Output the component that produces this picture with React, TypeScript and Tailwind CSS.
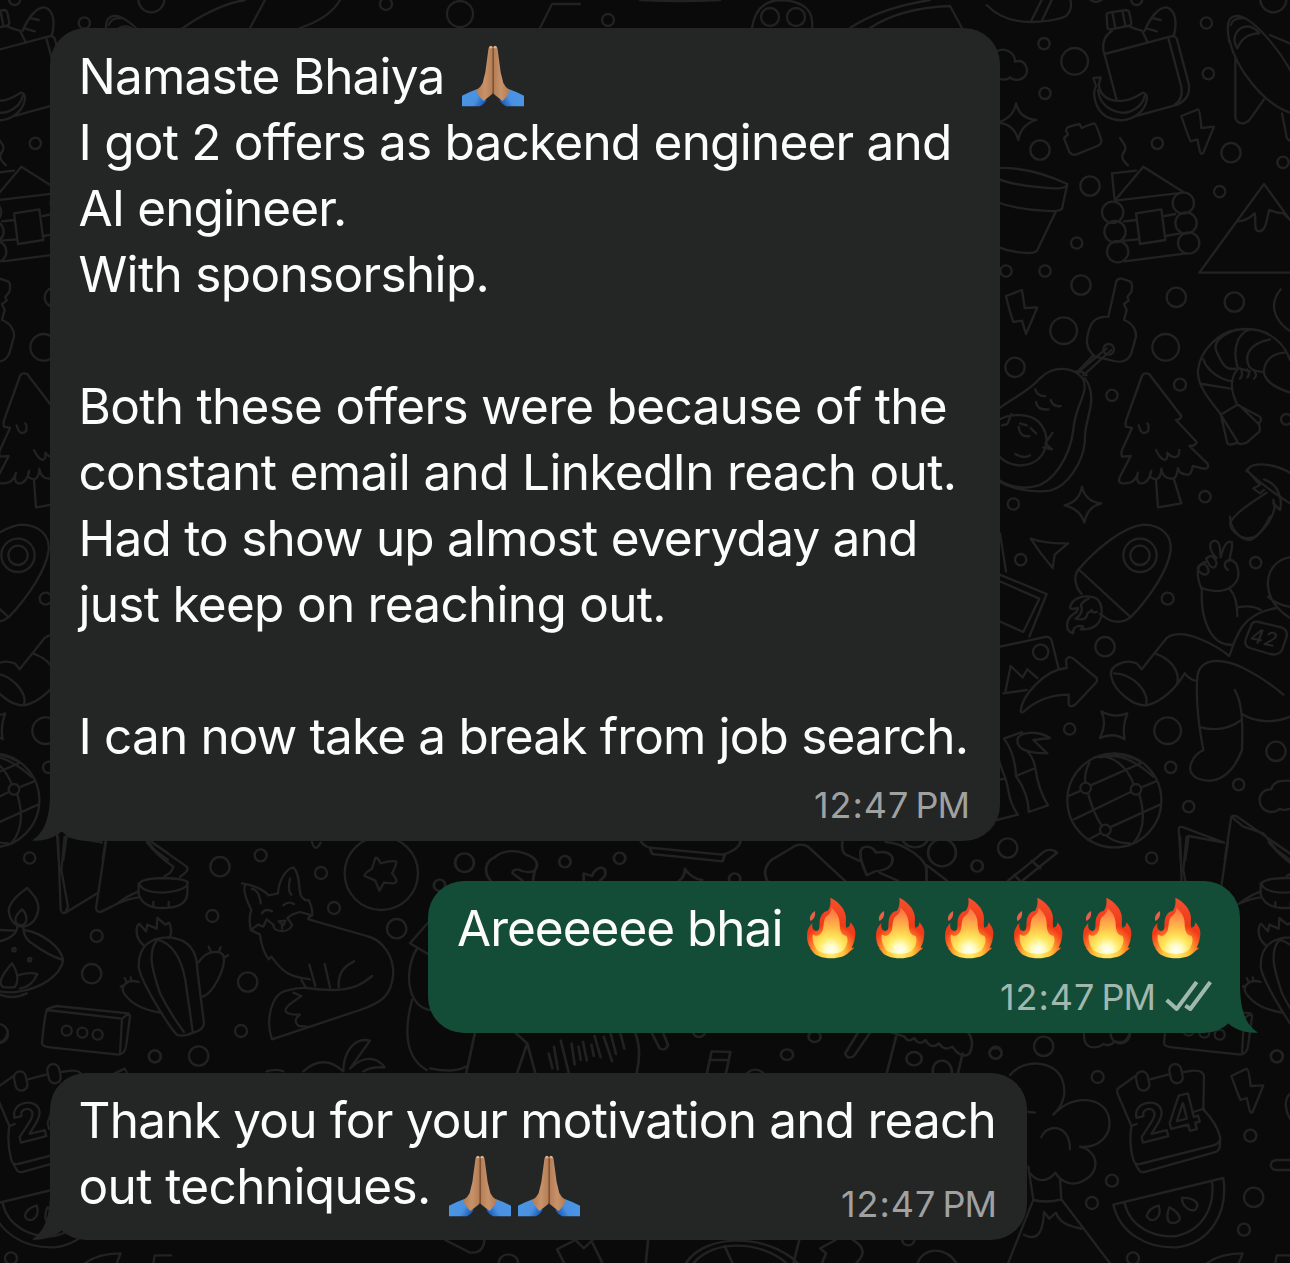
import type { ReactNode } from "react";

function Circles({ items }: { items: number[][] }) {
  return (
    <>
      {items.map(([x, y, r], i) => (
        <circle key={i} cx={x} cy={y} r={r} />
      ))}
    </>
  );
}

function Doodles() {
  return (
    <g id="doodles" fill="none" stroke="#222222" strokeWidth="7" strokeLinecap="round" strokeLinejoin="round">
      <g transform="translate(990 0) scale(.33333)">
        <Circles items={[[162,131,17],[254,184,40],[165,280,17],[150,450,29],[649,69,17],[655,221,17],[502,430,17],[723,458,29],[879,487,17],[300,558,29],[689,575,17],[260,729,17],[48,813,17],[165,813,17],[440,-2,17],[850,-2,39],[318,-20,26]]} />
        <path d="M-10 15Q40 68 130 66Q200 63 228 48Q252 25 238-10M122 66L160-10M155 64L190-10" />
        <path d="M20 155C40 140 75 155 75 185C105 175 120 210 104 230C92 242 70 243 60 232C50 242 30 240 20 232" />
        <path d="M78 310Q88 355 138 360Q92 375 85 420Q72 370 20 368Q70 355 78 310Z" />
        <path d="M232 382Q250 376 268 372L276 384Q290 376 312 370Q320 372 334 422Q334 432 322 438L258 464Q246 466 238 456L222 414L234 404L228 392Z" />
        <path d="M350 48Q346 42 358 38L408 30Q416 30 418 38L424 68Q424 76 414 78L362 88Q352 88 352 80ZM368 42L376 84M398 36L406 76" />
        <path d="M366 92Q335 112 340 150L380 300M420 80Q436 88 456 92L474 128M464 92C480 55 505 20 530 22C560 30 560 75 552 105M486 54L512 60M472 86L500 94M344 162L540 110Q552 104 560 115L596 250Q604 295 560 315L440 348M536 118L574 260Q580 300 552 316" />
        <path d="M310 234L332 232L326 256C335 300 370 305 400 302C430 300 452 280 460 278C480 285 470 320 445 342C420 362 385 368 350 350C315 330 306 280 318 258ZM324 270C330 330 390 345 420 335C455 320 462 300 464 288" />
        <path d="M574 348L624 328Q630 330 634 384L672 380L640 458Q635 466 630 456L622 418L602 424Q598 420 574 348Z" />
        <path d="M390 414C395 425 412 435 405 450C395 465 390 475 414 496M366 520L438 512M366 520L374 602L460 500L580 576M376 602L580 578M402 664L438 660M524 648L556 642M402 722L444 718M526 708L572 700M404 784L590 760M438 640L514 628L526 720L450 732Z" />
        <Circles items={[[368,637,32],[375,695,32],[383,755,32],[580,609,32],[588,669,32],[596,729,32]]} />
        <path d="M0 505Q110 495 232 552Q230 572 155 562Q70 556 20 535M232 552L216 626Q210 636 160 632Q80 628 20 606M198 634L142 750Q136 762 100 758Q60 756 20 740" />
        <path d="M718 125C705 60 720 45 750 48C790 60 880 150 930 270M742 145C720 110 745 75 780 80Q800 88 808 100Q760 100 742 145ZM722 75Q730 50 765 55M718 120C740 210 820 310 900 338M736 176V355C745 375 765 375 780 358L822 298M840 105L910 135M876 340L890 412Q896 426 910 420" />
        <path d="M628 818L822 552L900 660M910 818H628M740 664Q770 664 794 640C800 660 788 694 808 694C830 694 830 650 838 630Q860 640 880 640L900 660" />
      </g>

      <g transform="translate(990 270) scale(.33333)">
        <Circles items={[[273,45,29],[221,182,40],[75,292,29],[559,82,29],[733,96,29],[527,232,40],[570,344,18],[366,376,17],[645,680,17],[70,702,17],[889,448,16],[356,238,16]]} />
        <path d="M48 78L96 60L104 114L142 112L108 192L96 152L70 156Q60 130 48 78Z" />
        <path d="M355 140L378 38Q380 24 396 26L420 34Q430 40 424 66L412 80L416 92L402 102L410 120L402 150C430 160 440 185 438 200L424 250C412 278 390 280 360 270L316 260C290 240 288 220 292 200C300 160 310 140 355 140ZM350 235L272 300L254 306M310 256L262 306M364 240L280 316M262 308Q275 300 290 316" />
        <path d="M20 420C80 375 110 370 150 325C190 285 250 290 278 325C300 370 255 400 250 480C240 560 190 640 130 650C80 660 40 640 20 625M285 325C330 390 280 450 285 510C280 580 230 650 180 662C120 670 60 655 20 630M136 358Q142 380 166 378M182 390Q190 412 212 408M138 396Q142 422 176 418M30 448C60 430 120 430 145 455C170 480 180 520 155 556C130 590 70 600 28 560M64 432L52 462L36 466M188 488L166 520L186 538L160 532M86 470C88 492 100 502 118 498M122 474L138 490M76 552Q100 568 120 556M90 460L110 466" />
        <path d="M276 650Q286 695 334 700Q292 710 283 758Q270 716 224 706Q268 695 276 650Z" />
        <path d="M468 310Q478 310 482 318L574 438Q574 448 558 450L620 516Q618 528 598 528L652 580Q660 598 640 596L608 588Q604 616 592 614Q566 612 564 594Q560 626 548 626Q518 628 514 596Q512 634 490 626Q474 622 484 602Q476 642 450 640Q436 634 444 608Q436 640 404 640Q380 642 390 620L422 558L396 560Q392 548 396 540L426 474L408 470Q404 460 412 440L456 318Q460 310 468 310ZM446 466C452 490 460 494 474 484Q478 466 472 460M498 540C512 570 528 578 532 560L532 548C548 566 568 568 568 540M498 630L504 712L574 700L552 628" />
        <path d="M692 432C650 380 620 340 624 300C630 240 690 185 740 180C820 165 880 210 900 270M740 178C680 200 670 225 680 245C700 290 710 300 736 296M780 178C740 190 728 240 742 290M840 208C780 220 760 255 778 290Q790 304 822 306M884 248C840 250 820 280 822 310C830 340 870 360 910 370M640 268C650 300 690 330 728 334M636 342L722 356M696 432L742 404C720 360 720 320 746 294L780 304M754 300Q760 318 750 326M772 298Q782 312 772 322M792 302Q804 316 792 326M692 432L712 520Q720 528 742 518Q750 526 770 518L808 485Q812 470 806 462Q820 445 806 438L742 404M696 440L742 514M748 406L806 462" />
        <path d="M872 58C830 110 860 160 910 190M770 605C780 570 860 580 910 615M770 600Q820 650 900 700M774 604L810 645L790 655L810 670L822 660M822 628C860 640 880 680 870 720L850 700M850 690L854 712C845 760 800 805 780 804C750 808 720 780 720 760Q730 730 830 668" />
      </g>

      <g transform="translate(990 520) scale(.33333)">
        <Circles items={[[92,119,17],[450,106,50],[450,106,29],[533,236,18],[797,128,17],[345,380,29],[152,396,23],[239,627,17],[533,632,40],[858,694,29],[542,742,17],[746,794,17],[596,860,17],[53,984,29]]} />
        <path d="M122 56Q170 72 234 70L194 104L188 144Q150 100 122 56Z" />
        <path d="M264 150C320 85 400 20 460 14C520 15 545 50 542 90C535 150 480 230 424 290C400 310 370 310 345 292L330 282M268 150L420 290M264 150C250 170 255 200 275 222M300 230C340 230 345 290 320 315Q300 330 272 328Q290 315 264 318Q246 325 250 340C225 335 225 300 250 282Q262 278 264 264Q240 270 240 262C245 240 270 225 300 230M296 236Q265 250 276 266Q275 285 256 296Q290 305 292 280L306 270Q304 280 320 276" />
        <path d="M20 160L170 222L118 350M20 180L148 236L100 336L20 300M30 40L48 155M20 382L170 350Q182 350 186 366L206 446M40 520L110 510M46 516L62 438L98 472L112 448L142 474" />
        <path d="M92 574C95 530 160 450 230 444L228 420Q235 405 250 416L320 474Q324 484 314 492L258 552Q240 566 236 552L236 524C180 524 140 540 102 574Q96 580 92 574Z" />
        <path d="M455 448L440 430C400 415 355 440 364 470C370 510 430 560 470 556C520 545 560 500 584 460Q600 480 616 482M455 448L530 354C580 315 690 385 718 408C740 340 760 280 860 264M494 400C540 415 570 450 562 490M372 460C430 460 480 520 468 552M636 208C630 290 660 380 728 374M720 208C740 230 742 260 742 288M744 262Q785 254 812 270M636 210C615 160 620 130 650 125M636 204C690 230 770 200 738 130L725 120C700 120 700 140 714 150M680 114C655 90 655 65 675 62C690 65 690 80 692 112C700 80 710 60 725 66C730 80 722 95 718 122M626 138Q650 120 656 155Q650 170 634 160Q618 150 626 138M648 116Q670 95 680 130Q675 150 660 138Z" />
        <path d="M720-10C720 20 745 60 780 60Q810 50 840-10M910 110C860 115 830 150 834 200Q840 260 910 300M834 230Q860 255 910 262M770 350L784 315Q790 302 806 306L874 322Q894 330 890 350L876 390Q865 408 840 402L780 384Q758 376 770 350Z" />
        <path d="M640 690Q615 560 622 470C630 410 700 415 760 444Q830 480 880 524M734 510C760 550 758 630 756 690C730 760 680 800 620 774C580 750 610 705 640 690M632 622Q700 640 754 600M756 582C800 610 860 608 900 590" />
        <path d="M334 574Q370 596 412 580Q396 620 404 658Q370 636 330 654Q352 610 334 574Z" />
        <circle cx="373" cy="841" r="141" />
        <path d="M298 728Q282 760 286 788M294 820Q310 880 336 918M312 712C370 700 410 740 432 794M330 712Q400 690 490 770M448 824C465 880 465 930 430 970M236 828L272 812M302 796L456 728M252 898L422 816M454 802L498 784M294 960L330 940M360 922L510 854M352 950Q380 970 420 970M370 700Q410 705 450 724" />
        <Circles items={[[287,804,16],[438,808,16],[346,930,16]]} />
        <path d="M42 656Q75 700 78 768L136 744Q130 710 108 690M42 656L96 636M78 768C100 800 116 840 116 876L174 856Q145 810 136 744M82 660C85 635 140 630 180 654L130 660L172 700C120 700 80 690 82 660ZM20 900L84 884C50 840 60 800 40 760L20 700M22 780L44 776" />
        <path d="M910 784Q850 775 844 808C800 805 795 870 842 876Q860 876 868 866Q885 875 910 862M572 1020L566 925Q568 918 580 922L702 968M586 1020L596 948L702 968M704 1020L724 890Q735 884 744 892L900 1000M724 890L760 920L820 940L860 990L900 1020" />
      </g>
      <text x="1264" y="645" textAnchor="middle" transform="rotate(12 1265 638)" fontFamily="Inter, sans-serif" fontSize="20" fontStyle="italic" fontWeight="500" letterSpacing="1" fill="#262626" stroke="none">42</text>

      <g transform="translate(0 830) scale(.33333)">
        <Circles items={[[89,84,17],[660,110,29],[782,76,18],[963,129,18],[637,258,18],[290,318,18],[1002,234,18],[1190,296,29],[275,431,29],[743,456,29],[723,603,18],[465,679,18],[596,678,29],[-5,611,29],[1144,130,110],[200,602,15],[247,608,15],[293,614,15],[42,359,5],[89,389,5]]} />
        <path d="M174 20L182 240Q186 254 200 246L292 190M194 20L184 120L204 230L196 248M318 36L288 234Q290 250 306 244L350 222Q380 198 416 184M350 222Q390 204 416 202M440 36Q470 75 520 110Q515 130 494 138M460 40L560 110Q570 122 540 140" />
        <path d="M418 160Q430 145 490 144Q555 145 564 158Q560 182 490 188Q425 188 418 160ZM416 160V194Q430 232 480 234Q560 236 562 190V160M460 216V230M506 216V230" />
        <path d="M82 174Q30 210 26 240Q30 282 62 290C105 290 130 240 104 200ZM66 238C40 260 40 284 64 286C84 282 84 255 66 238ZM52 290Q50 320 0 334M70 290Q70 320 90 336Q150 380 190 390M0 300L46 302M74 300C130 310 180 350 190 390C180 440 120 475 60 484Q30 490 0 484M0 494Q40 510 80 490M36 400C10 430-10 460 10 472H44C60 450 50 420 36 400ZM52 436Q90 425 112 432Q96 470 60 476" />
        <path d="M430 345C400 320 410 280 418 282L438 304L442 284L470 296L472 264L496 284L508 278Q520 310 506 324M530 614C500 580 420 450 416 410C415 350 450 320 510 322C580 330 592 380 592 420L612 580Q610 600 580 608Q550 622 530 614ZM470 332C440 370 460 430 480 490Q510 550 552 606M470 328C520 340 545 390 556 450L578 604M596 396C620 360 660 360 670 376C680 410 640 490 608 500M416 456C380 445 360 470 372 490C400 530 440 540 480 548M626 350L632 364M662 352L656 366M684 376L672 382M362 470L372 466M374 444L380 456M392 442L394 452" />
        <path d="M140 540Q144 534 170 528L386 550L366 566L360 672M140 540L366 566M140 540Q132 570 126 640Q126 650 150 652L356 674Q374 672 378 650L390 560Q390 550 380 550" />
        <path d="M726 160C760 165 790 180 806 196L834 190C836 150 860 115 880 112C900 130 895 170 902 196Q915 215 926 210Q940 240 936 256Q920 266 926 268L1100 318C1150 330 1180 380 1180 430C1175 500 1140 520 1080 540L816 628C795 570 815 490 860 482Q890 472 920 474Q960 480 1000 480C1060 480 1090 460 1116 438M736 166Q725 180 754 240C745 265 750 300 756 302L780 314Q785 360 806 388L814 380C850 430 870 440 930 448M756 176C775 180 780 200 782 220M870 146C865 170 865 185 874 194M786 250Q795 234 816 244M850 226Q865 212 882 222M752 300L774 284L790 290L800 268L820 284C820 310 870 310 876 284L862 264L876 254L900 246L936 256M836 274L856 272L850 286ZM846 286V296M928 404L946 468M974 402L990 472M1016 472C1014 430 1030 410 1062 394M904 450L916 470M880 488L904 498L876 518C845 540 850 555 900 554Q876 570 896 588L920 590" />
        <path d="M936 36Q945 70 962 38" />
        <path d="M1126 84Q1132 80 1142 100Q1170 92 1188 94Q1192 100 1176 130Q1200 158 1180 160L1152 158L1138 182L1126 152L1094 138Q1092 130 1116 116Z" />
        <path d="M1284 278L1230 340L1284 372M1252 354C1210 420 1220 530 1290 540M1236 510C1215 590 1210 680 1280 720M910 724Q970 670 1030 724C1030 670 1060 620 1110 632L1050 716C1090 675 1130 680 1154 712Q1110 710 1090 724M800 724Q830 715 850 724" />
      </g>

      <g transform="translate(400 820) scale(.40816 .33333)">
        <ellipse cx="404" cy="125" rx="14" ry="17" />
        <ellipse cx="538" cy="115" rx="14" ry="17" />
        <ellipse cx="97" cy="196" rx="14" ry="17" />
        <ellipse cx="1414" cy="138" rx="14" ry="17" />
        <ellipse cx="820" cy="177" rx="14" ry="17" />
        <ellipse cx="158" cy="128" rx="23" ry="28" />
        <ellipse cx="1328" cy="98" rx="34" ry="41" />
        <ellipse cx="1262" cy="44" rx="34" ry="38" />
        <path d="M222 182C200 150 215 120 232 112C250 90 280 90 306 100C330 110 344 130 330 152L326 180M300 182L276 160Q275 148 290 148Q310 162 330 152M450 180V160L470 168C480 135 510 135 502 168L490 182M590 64Q600 84 620 84L790 104Q830 90 834 64M612 84L618 102L790 124L796 104M684 182Q698 170 698 146Q712 174 740 180M900 182Q885 150 910 120L970 76Q985 70 1000 80L1090 182M1084 64Q1080 100 1096 106L1128 124M1190 66C1240 70 1290 120 1290 150V182M1144 166C1120 100 1125 80 1145 80Q1160 82 1166 98C1200 90 1215 110 1202 136Q1190 152 1164 154ZM1175 158L1220 182M1290 135L1340 182M1490 182L1568 105Q1590 78 1610 98L1525 182M1505 164L1518 182M1548 122L1568 145" />
      </g>
      <g transform="translate(430 1010) scale(.38265 .33333)">
        <Circles items={[[703,65,16],[1005,80,16],[933,134,16],[1265,146,20],[1478,130,16],[1250,690,16],[205,758,25],[850,205,26]]} />
        <path d="M118 65L95 188M0 175Q60 190 94 170M220 65L254 100L228 188M254 100L275 188M535 65Q555 120 540 188M310 130L320 175M324 110L334 178M342 92L362 186M370 100L378 164M388 110L394 150M400 96L410 152M422 104L428 138M430 78L446 142M454 80L476 154M472 70L486 132M498 72L508 116M578 65L600 115Q615 125 622 105L608 65M724 188L736 124L785 126L774 188M732 150H780M1120 65L1085 130Q1090 150 1108 138L1152 65M1200 65L1240 80Q1250 100 1265 84Q1280 110 1295 90Q1310 120 1330 100Q1345 125 1365 110Q1390 150 1410 130Q1425 95 1405 65M1218 80L1194 188M1392 130L1380 188M1314 188C1310 140 1365 140 1364 188M40 690L105 728Q140 730 142 690M332 718L380 690L402 715L425 690M332 718L350 758M425 700L450 758M570 690L564 758M670 758C720 670 880 670 960 758M690 758C740 690 860 690 930 758M770 708L790 758M965 690L950 758M1060 690L1020 715L1035 730L1025 758M1105 690Q1150 720 1115 758M1275 758C1290 710 1350 710 1375 758" />
      </g>

      <g transform="translate(980 960) scale(.33333)">
        <Circles items={[[47,278,18],[191,259,29],[353,351,18],[890,289,18],[811,527,18],[396,662,18],[336,729,18],[821,712,29],[792,809,18],[459,895,18]]} />
        <path d="M312 220Q310 260 340 262Q360 262 370 252Q390 262 404 244Q440 255 448 220" />
        <path d="M90 345C130 295 220 300 245 355C260 390 255 430 220 464C280 400 370 410 386 470C400 530 350 565 300 560C360 575 360 640 310 662C280 680 245 670 226 638C200 670 170 665 150 640M184 532C200 490 270 490 270 568M145 456L165 458M145 620L160 720Q200 730 244 718L240 656M244 718L390 910M158 724L84 910M132 824C180 850 190 800 192 756L208 776L228 758C240 795 280 800 304 806" />
        <path d="M466 348L416 384Q408 390 414 404L454 498Q446 550 460 600Q465 615 480 612L700 556Q725 548 720 530Q710 490 670 448L672 350Q670 330 640 332L610 336M510 358L564 344M454 498L470 492M640 456L672 446M466 612L478 632Q484 640 500 634L708 576Q722 570 720 540" />
        <rect x="470" y="334" width="36" height="58" rx="18" transform="rotate(-12 488 363)" />
        <rect x="570" y="312" width="36" height="58" rx="18" transform="rotate(-12 588 341)" />
        <path d="M754 348L800 326Q806 326 812 378L850 376L818 456Q812 462 808 448L800 414L782 420Q778 415 754 348ZM940 600H890Q872 602 872 616Q876 632 892 630H940M940 396C905 410 915 460 940 490M940 886H890L886 910" />
        <path d="M400 734L730 654C745 760 690 850 590 862C500 865 420 820 400 734ZM434 730C450 800 520 835 590 828C670 810 705 740 696 664M536 736Q505 745 500 768Q510 786 526 778Q545 765 536 736ZM568 742Q555 775 570 788Q595 792 600 776Q595 755 568 742ZM606 714C605 735 625 755 645 750Q656 740 650 728Q635 712 606 714ZM680 910Q720 880 788 880L776 910" />
        <text x="463" y="528" transform="rotate(-14 560 470)" fontFamily="Inter, sans-serif" fontSize="152" fontWeight="700">24</text>
      </g>

      <g strokeWidth="2.300">
        <Circles items={[[460,14,13],[608,20,6],[770,17,9],[796,17,9],[386,4,6]]} />
        <path d="M180 30Q215 5 245 0M250 28L265 0M300 28Q330 18 340 0M540 28L552 4H580M640 0Q680 2 720 0M752 28Q756 0 782 0Q815 2 812 28M850 28Q880 8 930 0M870 28Q900 8 950 6L962 28" />
      </g>
    </g>
  );
}

function Wallpaper() {
  return (
    <svg className="absolute inset-0" width="1290" height="1263" viewBox="0 0 1290 1263" aria-hidden="true">
      <Doodles />
      <use href="#doodles" x="-1122" />
      <use href="#doodles" x="1122" />
    </svg>
  );
}

function Fire() {
  return (
    <svg className="block h-[62px] w-[69px] shrink-0" viewBox="0 0 207 186" role="img" aria-label="fire">
      <defs>
        <radialGradient id="fireOuter" gradientUnits="userSpaceOnUse" cx="72" cy="168" r="168">
          <stop offset="0" stopColor="#fff27a" />
          <stop offset=".22" stopColor="#ffc63c" />
          <stop offset=".38" stopColor="#fb7427" />
          <stop offset=".52" stopColor="#f03a18" />
          <stop offset="1" stopColor="#f4512f" />
        </radialGradient>
        <radialGradient id="fireInner" gradientUnits="userSpaceOnUse" cx="72" cy="160" r="134">
          <stop offset="0" stopColor="#ffffff" />
          <stop offset=".14" stopColor="#fffbc0" />
          <stop offset=".3" stopColor="#ffe75c" />
          <stop offset=".5" stopColor="#ffbe4a" />
          <stop offset=".72" stopColor="#ff9448" />
          <stop offset="1" stopColor="#ff7444" stopOpacity=".75" />
        </radialGradient>
      </defs>
      <path d="M24 42C12 50 6 60 10 72C22 66 26 56 24 42Z" fill="#e9604a" />
      <path d="M70 2C90 12 108 28 114 48C120 64 114 78 118 92C126 92 130 84 130 76C142 88 148 104 144 120C142 136 138 144 134 152L142 152C136 158 132 160 129 163C116 178 96 184 74 184C44 184 24 176 16 163L8 152L12 154C4 146 0 130 0 116C0 100 6 88 16 78C14 92 18 100 28 102C40 100 36 88 38 72C40 56 50 42 62 42C70 32 72 18 70 2Z" fill="url(#fireOuter)" />
      <path d="M73 32C90 46 98 62 98 80C98 100 104 116 118 116C126 128 120 146 110 158C98 174 46 174 30 158C20 144 14 126 18 112C28 122 42 114 48 98C50 84 50 70 56 60C66 54 74 44 73 32Z" fill="url(#fireInner)" />
    </svg>
  );
}

function FoldedHands() {
  return (
    <svg className="block h-[62px] w-[69px] shrink-0" viewBox="0 0 207 186" role="img" aria-label="folded hands">
      <defs>
        <linearGradient id="sleeve" x1="0" x2="1" y1="0.3" y2="0.7">
          <stop offset="0" stopColor="#4b96e6" />
          <stop offset=".6" stopColor="#4a90e0" />
          <stop offset="1" stopColor="#1255b4" />
        </linearGradient>
        <linearGradient id="hand" x1="0" x2="1">
          <stop offset="0" stopColor="#b27a50" />
          <stop offset=".5" stopColor="#c8936a" />
          <stop offset="1" stopColor="#b07a52" />
        </linearGradient>
      </defs>
      {[false, true].map((flip) => (
        <g key={String(flip)} transform={flip ? "translate(186 0) scale(-1 1)" : undefined}>
          <path d="M0 184V152Q24 140 46 132Q60 150 74 166Q66 178 54 184Z" fill="url(#sleeve)" />
          <path d="M94 8Q90 0 84 3Q79 6 78 22L70 82Q66 98 62 114Q56 128 42 136Q50 156 64 168Q78 158 90 148Q95 142 95 130Z" fill="url(#hand)" />
          <path d="M82 8Q84 1 89 4L90 10H82Z" fill="#e0b795" />
        </g>
      ))}
      <path d="M93.500 10V146" stroke="#6f4328" strokeWidth="3.500" />
    </svg>
  );
}

function Line({ text, spacing = "", children }: { text: string; spacing?: string; children?: ReactNode }) {
  return (
    <p className="flex h-[66px] items-start whitespace-pre text-[49.5px] leading-[66px]">
      <span className={spacing}>{text}</span>
      {children}
    </p>
  );
}

function Time({ className = "" }: { className?: string }) {
  return (
    <span className={"flex text-[36px] leading-[44px] " + className}>
      <span className="tracking-[1px]">12:47</span>
      <span className="ml-[6px] tracking-[-1px]">PM</span>
    </span>
  );
}

function Tail({ mine = false }: { mine?: boolean }) {
  return (
    <svg
      className={"absolute bottom-0 h-[50px] w-[46px] " + (mine ? "-right-[18px] -scale-x-100 text-[#144d37]" : "-left-[18px] text-[#242626]")}
      viewBox="0 0 46 50"
      aria-hidden="true"
    >
      <path d="M18 0C18 22 15 40 0 49.500C12 50.500 22 47 29 41L42 30V0Z" fill="currentColor" />
    </svg>
  );
}

export default function App() {
  return (
    <main className="relative h-[1263px] w-[1290px] overflow-hidden bg-[#0a0a0a] font-['Inter','Liberation_Sans',sans-serif] text-[#fcfcfc]">
      <Wallpaper />
      <section className="relative flex flex-col items-start pl-[50px] pt-[28px]">
        <article className="relative h-[813px] w-[950px] rounded-[36px] bg-[#242626] pl-[28.5px] pt-[15px]">
          <Tail />
          <div className="relative">
            <Line text="Namaste Bhaiya" spacing="tracking-[-0.84px]">
              <span className="ml-[18px] mt-[2px]"><FoldedHands /></span>
            </Line>
            <Line text="I got 2 offers as backend engineer and" spacing="tracking-[-0.77px]" />
            <Line text="AI engineer." spacing="tracking-[-0.9px]" />
            <Line text="With sponsorship." spacing="tracking-[-0.66px]" />
            <Line text=" " />
            <Line text="Both these offers were because of the" spacing="tracking-[-0.7px]" />
            <Line text="constant email and LinkedIn reach out." spacing="tracking-[-0.66px]" />
            <Line text="Had to show up almost everyday and" spacing="tracking-[-0.78px]" />
            <Line text="just keep on reaching out." spacing="tracking-[-0.71px]" />
            <Line text=" " />
            <Line text="I can now take a break from job search." spacing="tracking-[-0.84px]" />
          </div>
          <Time className="absolute bottom-[14px] right-[31px] text-[#a0a1a1]" />
        </article>

        <article className="relative ml-[378px] mt-[40px] h-[152px] w-[812px] rounded-[36px] bg-[#144d37] pl-[29px] pt-[14px]">
          <Tail mine />
          <div className="relative">
            <Line text="Areeeeee bhai" spacing="tracking-[-1px]">
              <span className="ml-[25px] mt-[2px] flex">
                <Fire /><Fire /><Fire /><Fire /><Fire /><Fire />
              </span>
            </Line>
          </div>
          <div className="absolute bottom-[14px] right-[28px] flex items-center text-[#a1b8af]">
            <Time />
            <svg className="ml-[10px] h-[32px] w-[47px]" viewBox="0 0 141 96" fill="none" stroke="currentColor" strokeWidth="12" strokeLinejoin="round" aria-label="delivered">
              <path d="M5 57L35 84L95 3M61 74L76 84L136 3" />
            </svg>
          </div>
        </article>

        <article className="relative mt-[40px] h-[167px] w-[977px] rounded-[36px] bg-[#242626] pl-[28.5px] pt-[14px]">
          <Tail />
          <div className="relative">
            <Line text="Thank you for your motivation and reach" spacing="tracking-[-0.78px]" />
            <Line text="out techniques." spacing="tracking-[-0.61px]">
              <span className="ml-[18px] mt-[2px] flex"><FoldedHands /><FoldedHands /></span>
            </Line>
          </div>
          <Time className="absolute bottom-[14px] right-[31px] text-[#a0a1a1]" />
        </article>
      </section>
    </main>
  );
}
